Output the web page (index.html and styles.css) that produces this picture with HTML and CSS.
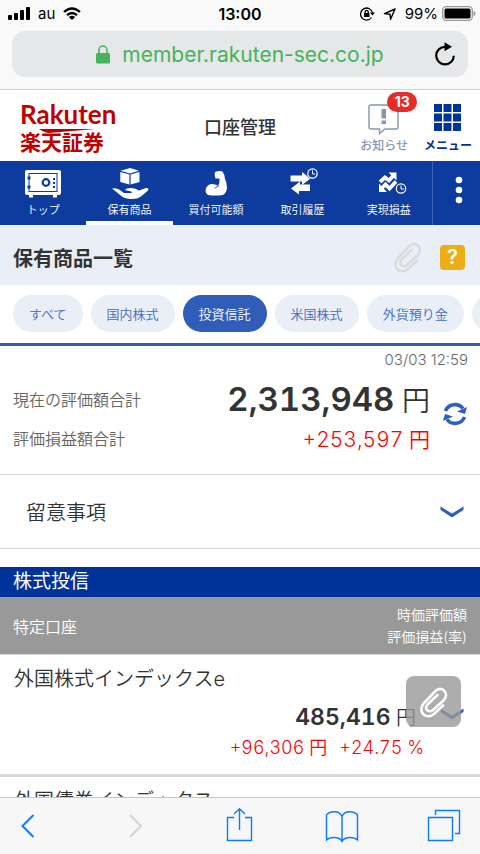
FILE: index.html
```html
<!DOCTYPE html>
<html lang="ja">
<head>
<meta charset="utf-8">
<meta name="viewport" content="width=device-width, initial-scale=1">
<title>保有商品一覧</title>
<link rel="stylesheet" href="styles.css">
</head>
<body>
<div class="browser-top">
  <div class="status">
    <div class="status-side">
      <svg width="22" height="14" viewBox="0 0 22 14"><rect x="0" y="8" width="4" height="5" rx="1"/><rect x="6" y="6" width="4" height="7" rx="1"/><rect x="12" y="3" width="4" height="10" rx="1"/><rect x="18" y="0" width="4" height="13" rx="1"/></svg>
      <span>au</span>
      <svg width="18" height="14" viewBox="0 0 18 14" fill="none" stroke="#000" stroke-width="2.3"><path d="M1 5Q9-2 17 5M4 8.200Q9 3.800 14 8.200"/><path d="M9 13L5.800 9.900Q9 7.600 12.200 9.900Z" fill="#000" stroke="none"/></svg>
    </div>
    <b>13:00</b>
    <div class="status-side status-right">
      <svg width="15" height="14" viewBox="0 0 15 14" fill="none" stroke="#000" stroke-width="1.300"><path d="M11.500 10.500A6 6 0 1 1 12.500 6"/><path d="M10 5.500H15L12.500 8.500Z" fill="#000" stroke="none"/><rect x="4" y="6" width="5.500" height="4" fill="#000" stroke="none"/><path d="M5.200 6.500V4.800a1.500 1.500 0 0 1 3 0V6.500"/></svg>
      <svg width="14" height="14" viewBox="0 0 14 14" fill="none" stroke="#000" stroke-width="1.400" stroke-linejoin="round"><path d="M12 2L1.500 6.600L7 7.200L7.600 12.300Z"/></svg>
      <span>99%</span>
      <svg width="34" height="15" viewBox="0 0 34 15"><rect x=".7" y=".7" width="29.600" height="13.600" rx="3.500" fill="none" stroke="#999" stroke-width="1.300"/><rect x="2.500" y="2.500" width="26" height="10" rx="1.500"/><path d="M31.500 5q2 .5 2 2.500t-2 2.500z" fill="#999"/></svg>
    </div>
  </div>
  <div class="address">
    <svg width="14" height="19" viewBox="0 0 14 19"><rect x="0" y="8" width="14" height="10.500" rx="1.500" fill="#45b35b"/><path d="M3 9V5a4 4 0 0 1 8 0v4" fill="none" stroke="#45b35b" stroke-width="1.500"/></svg>
    <span>member.rakuten-sec.co.jp</span>
    <button class="reload" aria-label="再読み込み"><svg width="22" height="26" viewBox="0 0 22 26"><path d="M11 5.800A8.800 8.800 0 1 0 19.800 14.800" fill="none" stroke="#000" stroke-width="2.200"/><path d="M10.500 1.200L18 5.800L10.500 10.200Z"/></svg></button>
  </div>
</div>

<main>
  <header class="site">
    <a class="logo" href="#"><span class="logo-en">Rakuten</span><svg width="96" height="4" viewBox="0 0 96 4"><path d="M19 0H75L29 4Q25 4 19 0Z" fill="#bf0000"/></svg><span class="logo-ja">楽天証券</span></a>
    <h1>口座管理</h1>
    <div class="site-actions">
      <a class="notice" href="#">
        <svg width="32" height="31" viewBox="0 0 32 31"><path d="M3 1H28Q30 1 30 3V23Q30 25 28 25H17L11.500 29.500V25H3Q1 25 1 23V3Q1 1 3 1Z" fill="#fff" stroke="#8596b0" stroke-width="1.400"/><path d="M13.500 5H18V14.500H13.500ZM13.500 16.500H18V20H13.500Z" fill="#8596b0"/></svg>
        <span>お知らせ</span><em>13</em>
      </a>
      <a class="menu" href="#">
        <svg width="27" height="27" viewBox="0 0 27 27" fill="#039"><path d="M0 0h8v8H0zM9.500 0h8v8h-8zM19 0h8v8h-8zM0 9.500h8v8H0zM9.500 9.500h8v8h-8zM19 9.500h8v8h-8zM0 19h8v8H0zM9.500 19h8v8h-8zM19 19h8v8h-8z"/></svg>
        <span>メニュー</span>
      </a>
    </div>
  </header>

  <nav class="tabs">
    <a href="#"><svg width="38" height="32" viewBox="0 0 38 32"><rect x="1" y="2" width="36" height="25" rx="2" fill="#fff"/><path d="M5 27h4v2.500H5zM29 27h4v2.500h-4z" fill="#fff"/><rect x="5" y="5.500" width="28" height="18" fill="none" stroke="#0d3c9e"/><path d="M3.500 8.500h3v3h-3zM3.500 17.500h3v3h-3z" fill="#0d3c9e"/><circle cx="22" cy="14.500" r="3.300" fill="none" stroke="#0d3c9e" stroke-width="2.200"/><path d="M30 10v2M30 14v2M30 18v2" stroke="#0d3c9e" stroke-width="2"/></svg><span>トップ</span></a>
    <a href="#" class="current"><svg width="38" height="32" viewBox="0 0 38 32" fill="#fff"><path d="M19 0L28 2.800L19 5.500L9.500 2.800ZM9.300 4L18.400 6.500V16.500L9.300 14ZM19.600 6.500L28.500 4V14L19.600 16.500Z"/><path d="M1 20.500Q4 19.500 8 21.500L13 25H20Q22 24.500 20 23.500L14 22Q15 20 20 20Q25 20 28 22.500L35 20Q38.500 20 37 22.500L30 28.500Q26 31.300 20 31Q14 30.500 11 28.500Z"/></svg><span>保有商品</span></a>
    <a href="#"><svg width="38" height="32" viewBox="0 0 38 32"><path d="M18 4Q22 2.500 25.500 3.500Q27.500 6 28 11Q30 15 30 20Q29.500 25 26 27Q18 28 11 27Q7.500 25 9 20Q12 14.500 18 16.500L21 17.500Q23 15 22.500 10.500L18.500 10.500Q17 7 18 4Z" fill="#fff"/><path d="M22 17.500Q19 18.500 18 20.500" stroke="#0d3c9e" fill="none"/></svg><span>買付可能額</span></a>
    <a href="#"><svg width="38" height="32" viewBox="0 0 38 32"><path d="M7.500 7.500H19V4L27.500 10.500L19 17V13.500H7.500ZM27 16.500H17V13.500L8 20.500L16 26.500V23H27Z" fill="#fff"/><circle cx="29.500" cy="5.500" r="5.800" fill="#0d3c9e"/><circle cx="29.500" cy="5.500" r="4.700" fill="none" stroke="#fff" stroke-width="1.200"/><path d="M29.500 2.500V6H32" fill="none" stroke="#fff"/></svg><span>取引履歴</span></a>
    <a href="#"><svg width="38" height="32" viewBox="0 0 38 32"><path d="M10 14L15 9.500L19 12.500L23.500 7.500M26 13.500L19.500 20.500L15.500 16.500L11.500 20.500" fill="none" stroke="#fff" stroke-width="3.800"/><path d="M18.500 4.500H26.500V12.500ZM9 15.500V24H17Z" fill="#fff"/><circle cx="31" cy="20.500" r="5.800" fill="#0d3c9e"/><circle cx="31" cy="20.500" r="4.700" fill="none" stroke="#fff" stroke-width="1.200"/><path d="M31 17.500V21H34" fill="none" stroke="#fff"/></svg><span>実現損益</span></a>
    <button class="more" aria-label="その他"><svg width="8" height="28" viewBox="0 0 8 28" fill="#fff"><circle cx="4" cy="4" r="3.300"/><circle cx="4" cy="14" r="3.300"/><circle cx="4" cy="24" r="3.300"/></svg></button>
  </nav>

  <div class="page-title">
    <h2>保有商品一覧</h2>
    <svg width="32" height="32" viewBox="0 0 32 32"><use href="#clip" stroke="#dcdcdc"/></svg>
    <button class="help" aria-label="ヘルプ">?</button>
  </div>

  <div class="pills">
    <button>すべて</button><button>国内株式</button><button class="on">投資信託</button><button>米国株式</button><button>外貨預り金</button><button aria-label="その他の商品" class="next"></button>
  </div>

  <section class="summary">
    <time>03/03 12:59</time>
    <div class="summary-body">
      <dl>
        <div class="total"><dt>現在の評価額合計</dt><dd><strong>2,313,948</strong> 円</dd></div>
        <div class="gain"><dt>評価損益額合計</dt><dd>+253,597 円</dd></div>
      </dl>
      <button class="refresh" aria-label="更新"><svg width="26" height="24" viewBox="0 0 26 24"><path d="M3.500 9A10 9.500 0 0 1 21 6.500M22.500 15A10 9.500 0 0 1 5 17.500" fill="none" stroke="#2f5fbd" stroke-width="3.600"/><path d="M25 5L23 12L15 9.500ZM1 19L3 12L11 14.500Z" fill="#2f5fbd"/></svg></button>
    </div>
  </section>

  <button class="notes"><span>留意事項</span><svg width="24" height="12" viewBox="0 0 24 12"><use href="#chevron"/></svg></button>

  <section class="holdings">
    <h3>株式投信</h3>
    <div class="account"><span>特定口座</span><p>時価評価額<br>評価損益(率)</p></div>
    <article>
      <h4>外国株式インデックスe</h4>
      <div class="value"><span><strong>485,416</strong> 円</span><svg width="24" height="12" viewBox="0 0 24 12"><use href="#chevron"/></svg></div>
      <div class="change"><span>+96,306 円</span><span>+24.75 %</span></div>
    </article>
    <article><h4>外国債券インデックスe</h4></article>
  </section>
</main>

<button class="float" aria-label="クリップ"><svg width="32" height="32" viewBox="0 0 32 32"><use href="#clip" stroke="#fff"/></svg></button>

<footer class="toolbar">
  <button aria-label="戻る"><svg width="36" height="36" viewBox="0 0 36 36"><path d="M21.500 7L10.500 18L21.500 29" stroke-width="2"/></svg></button>
  <button aria-label="進む" disabled><svg width="36" height="36" viewBox="0 0 36 36"><path d="M14 7L25 18L14 29" stroke-width="2"/></svg></button>
  <button aria-label="共有"><svg width="36" height="36" viewBox="0 0 36 36"><path d="M15 9.500H8.500V32.500H32.500V9.500H26M20.500 22V1M15 6L20.500 .8L26 6"/></svg></button>
  <button aria-label="ブックマーク"><svg width="36" height="36" viewBox="0 0 36 36"><path d="M19 8.500Q17 3.700 11.500 3.700Q5.500 3.700 3.500 7V32Q6 29.500 11 29.500Q17 29.500 19 33.500Q21 29.500 27 29.500Q32 29.500 34.500 32V7Q32 3.700 26.500 3.700Q21 3.700 19 8.500V33"/></svg></button>
  <button aria-label="タブ"><svg width="36" height="36" viewBox="0 0 36 36"><path d="M2.500 9.500H26.500V32.500H2.500ZM9.500 7V2.500H33.500V25.500H29"/></svg></button>
</footer>

<svg class="defs" width="0" height="0" aria-hidden="true">
  <defs>
    <path id="clip" d="M25 19.500L16 28Q10 32.500 5 28Q1.500 23 5.500 17.500L17 5.500Q21.500 1 26 4.500Q30 9 26 14L15 24Q12 26.500 9 24Q7 21.500 9.500 18.500L19.500 9" fill="none" stroke-width="2.600" stroke-linecap="round"/>
    <path id="chevron" d="M.5 0.500L12 7.500L23.500 .5V4L12 11.500L.5 4Z" fill="#2f5fbd"/>
  </defs>
</svg>
</body>
</html>
```

FILE: styles.css
```css
* { box-sizing: border-box; }
body {
  margin: 0;
  height: 100vh;
  display: flex;
  flex-direction: column;
  overflow: hidden;
  background: #fff;
  color: #333;
  font-family: Inter, "Noto Sans CJK JP", sans-serif;
}
h1, h2, h3, h4, p, dl, dd { margin: 0; }
a { text-decoration: none; color: inherit; }
button { margin: 0; padding: 0; border: 0; background: none; font: inherit; color: inherit; }
svg { display: block; flex: none; }
.defs { position: absolute; }

/* Browser chrome */
.browser-top { flex: none; background: #f9f9f9; border-bottom: 1px solid #d2d3d5; padding: 0 12px 12px; }
.status {
  display: grid;
  grid-template-columns: 1fr auto 1fr;
  align-items: center;
  height: 27px;
  margin: 0 -4px 4px;
  font-size: 15px;
  color: #000;
}
.status b { font-size: 16px; font-weight: 600; }
.status-side { display: flex; align-items: center; gap: 8px; }
.status-right { justify-content: flex-end; margin-right: -4px; }
.status-right span { margin-right: -4px; }
.address {
  position: relative;
  display: flex;
  align-items: center;
  justify-content: center;
  gap: 12px;
  height: 46px;
  border-radius: 13px;
  background: #e6e7e9;
  color: #45b35b;
  font-size: 21px;
}
.reload { position: absolute; right: 12px; top: 10px; }

main { flex: 1; min-height: 0; overflow: hidden; }

/* Site header */
.site {
  display: grid;
  grid-template-columns: 1fr auto 1fr;
  align-items: center;
  height: 71px;
  padding: 0 8px;
}
.logo { display: flex; flex-direction: column; padding-left: 12px; color: #bf0000; }
.logo-en { font-size: 26px; font-weight: 700; line-height: 30px; font-family: Lato, sans-serif; }
.logo-ja { font-size: 21px; font-weight: 700; line-height: 20px; }
h1 { font-size: 18px; font-weight: 500; }
.site-actions { display: flex; justify-content: flex-end; gap: 16px; padding-top: 7px; }
.site-actions a { position: relative; display: flex; flex-direction: column; align-items: center; justify-content: space-between; height: 51px; }
.site-actions span { font-size: 12px; line-height: 18px; }
.notice { color: #8596b0; font-weight: 500; }
.menu { color: #039; font-weight: 700; }
.notice em {
  position: absolute;
  left: 27px;
  top: -12px;
  width: 30px;
  border-radius: 10px;
  background: #e62b2b;
  color: #fff;
  font: 700 14px/20px Inter, sans-serif;
  text-align: center;
}

/* Main tabs */
.tabs { display: flex; height: 64px; background: #0d3c9e; color: #fff; }
.tabs a { flex: 1; display: flex; flex-direction: column; align-items: center; justify-content: space-between; padding: 7px 0 2px; font-size: 11px; font-weight: 350; line-height: 18px; border-bottom: 4px solid transparent; }
.tabs .current { border-color: #fff; }
.more { flex: 0 0 48px; display: flex; align-items: center; justify-content: center; padding: 0 0 6px 4px; border-left: 1px solid #3d63b2; }

.page-title { display: flex; align-items: center; height: 60px; padding: 4px 15px 0 13px; background: #e9eef7; gap: 16px; }
h2 { flex: 1; font-size: 20px; font-weight: 700; }
.help { width: 25px; height: 25px; border-radius: 4px; background: #edad15; color: #fff; font-size: 20px; font-weight: 600; line-height: 25px; }

.pills { display: flex; gap: 8px; padding: 10px 0 11px 13px; overflow: hidden; border-bottom: 3px solid #2c5dba; }
.pills button { flex: none; height: 37px; padding: 0 16px; border-radius: 19px; background: #e9eef7; color: #416bbf; font-size: 13px; font-weight: 350; }
.pills .on { background: #2f5db8; color: #fff; }
.pills .next { width: 71px; }

/* Totals */
.summary { padding: 4px 12px 0 13px; height: 129px; border-bottom: 1px solid #d9d9d9; color: #666; }
time { display: block; text-align: right; font-size: 15px; line-height: 20px; font-weight: 300; }
.summary-body { display: flex; align-items: center; gap: 12px; padding-top: 9px; }
dl { flex: 1; }
dl div { display: flex; align-items: center; justify-content: space-between; height: 39px; }
dt { font-size: 16px; font-weight: 350; }
dd { font-size: 21px; font-weight: 350; color: #333; font-variant-numeric: tabular-nums; }
.total dd { font-size: 28px; }
.total strong { font-size: 33px; font-weight: 600; }
.gain dd { color: #f00; }
strong { font-weight: 600; }
.refresh { padding-bottom: 8px; }

.notes { display: flex; width: 100%; height: 74px; align-items: center; justify-content: space-between; padding: 0 16px 0 26px; border-bottom: 1px solid #d9d9d9; font-size: 20px; font-weight: 350; }

/* Holdings */
.holdings { padding-top: 18px; font-weight: 350; }
h3 { padding-left: 13px; background: #039; color: #fff; font-size: 19px; font-weight: 400; line-height: 30px; }
.account { display: flex; align-items: center; justify-content: space-between; height: 57px; padding: 0 13px; background: #999; color: #fff; font-size: 16px; }
.account p { text-align: right; font-size: 14px; line-height: 22px; }
article { height: 122px; padding: 9px 16px 0 14px; border-top: 1px solid #d9d9d9; border-bottom: 2px solid #d9d9d9; }
h4 { font-size: 20px; font-weight: 350; line-height: 30px; }
.value, .change { display: flex; justify-content: flex-end; font-variant-numeric: tabular-nums; }
.value { align-items: center; gap: 24px; margin-top: 8px; font-size: 20px; line-height: 30px; }
.value strong { font-size: 23px; }
.change { gap: 12px; padding-right: 40px; color: #f00; font-size: 18px; line-height: 30px; }
.value svg { margin-bottom: 8px; }

.float { position: absolute; right: 19px; bottom: 127px; width: 55px; height: 51px; border-radius: 8px; background: rgba(153, 153, 153, .8); display: flex; align-items: center; justify-content: center; }

.toolbar { flex: none; display: flex; justify-content: space-between; height: 57px; padding: 10px 18px 0 12px; border-top: 1px solid #c5c7c9; background: #f7f7f8; }
.toolbar button { width: 36px; height: 36px; }
.toolbar svg { fill: none; stroke: #0a7aff; stroke-width: 1.4; }
.toolbar button:disabled svg { stroke: #d2d3d5; }
```
